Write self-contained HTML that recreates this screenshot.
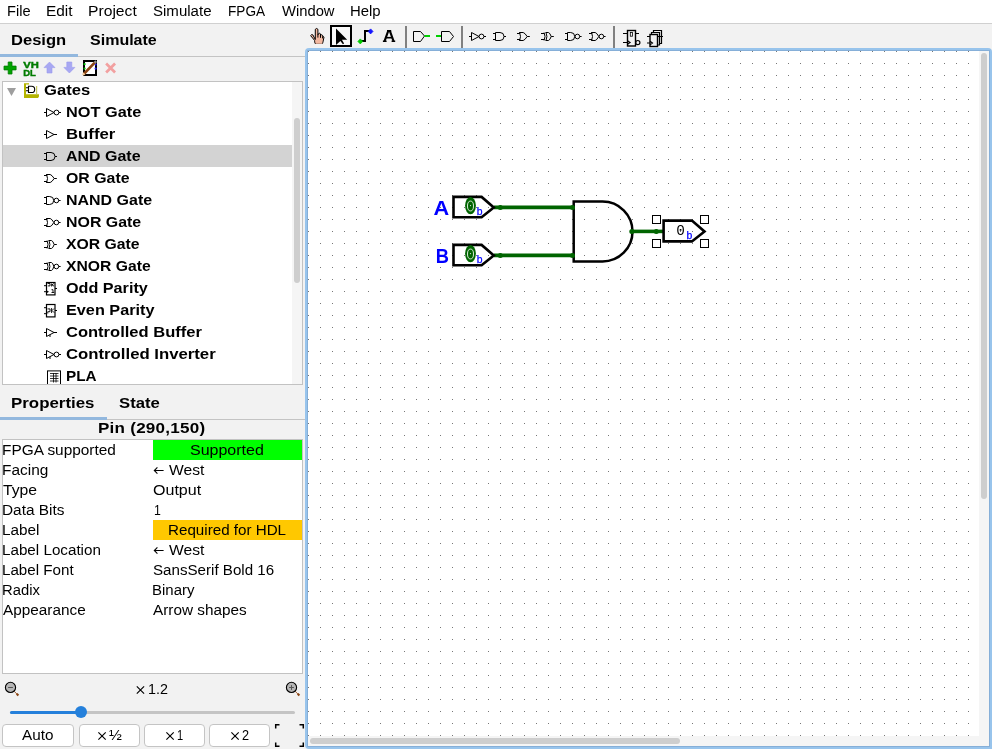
<!DOCTYPE html>
<html><head><meta charset="utf-8"><title>Logisim-evolution</title>
<style>
html,body{margin:0;padding:0;font-family:"Liberation Sans",sans-serif;}
body{width:992px;height:749px;position:relative;overflow:hidden;background:#f2f2f2;
 font-family:"Liberation Sans",sans-serif;}
.t{position:absolute;white-space:pre;line-height:1;transform-origin:0 0;color:#000;font-family:"Liberation Sans",sans-serif;}
.b{position:absolute;box-sizing:border-box;}
svg{position:absolute;overflow:visible;}
.btn{position:absolute;box-sizing:border-box;background:#fff;border:1px solid #c4c4c4;border-radius:4px;}
#all{position:absolute;left:0;top:0;width:992px;height:749px;will-change:transform;}
</style></head><body><div id="all">

<div class="b" style="left:0;top:0;width:992px;height:23px;background:#fff;"></div>
<div class="b" style="left:0;top:23px;width:992px;height:1px;background:#d0d0d0;"></div>
<span class="t" style="left:7.30px;top:3.56px;font-size:14.7px;transform:scaleX(0.9948);">File</span>
<span class="t" style="left:46.13px;top:3.56px;font-size:14.7px;transform:scaleX(1.0492);">Edit</span>
<span class="t" style="left:88.41px;top:3.56px;font-size:14.7px;transform:scaleX(1.0665);">Project</span>
<span class="t" style="left:152.90px;top:3.56px;font-size:14.7px;transform:scaleX(1.0239);">Simulate</span>
<span class="t" style="left:227.58px;top:3.56px;font-size:14.7px;transform:scaleX(0.9264);">FPGA</span>
<span class="t" style="left:281.62px;top:3.56px;font-size:14.7px;transform:scaleX(1.0052);">Window</span>
<span class="t" style="left:350.48px;top:3.56px;font-size:14.7px;transform:scaleX(1.0142);">Help</span>
<span class="t" style="left:11.29px;top:32.56px;font-size:14.7px;transform:scaleX(1.1272);font-weight:bold;">Design</span>
<span class="t" style="left:90.11px;top:32.56px;font-size:14.7px;transform:scaleX(1.0909);font-weight:bold;">Simulate</span>
<div class="b" style="left:0;top:56px;width:305px;height:1px;background:#c4c4c4;"></div>
<div class="b" style="left:0;top:54px;width:78px;height:3px;background:#93b8de;"></div>
<div class="b" style="left:2px;top:81px;width:301px;height:304px;background:#fff;border:1px solid #c2c2c2;"></div>
<div class="b" style="left:3px;top:145px;width:289px;height:22px;background:#d3d3d3;"></div>
<div class="b" style="left:292px;top:82px;width:10px;height:302px;background:#f5f5f5;"></div>
<div class="b" style="left:294px;top:118px;width:6px;height:165px;background:#cecece;border-radius:3px;"></div>
<span class="t" style="left:44.07px;top:83.16px;font-size:14.7px;transform:scaleX(1.1315);font-weight:bold;">Gates</span>
<span class="t" style="left:65.56px;top:104.56px;font-size:14.7px;transform:scaleX(1.1107);font-weight:bold;">NOT Gate</span>
<span class="t" style="left:65.53px;top:126.56px;font-size:14.7px;transform:scaleX(1.1399);font-weight:bold;">Buffer</span>
<span class="t" style="left:66.23px;top:148.56px;font-size:14.7px;transform:scaleX(1.0878);font-weight:bold;">AND Gate</span>
<span class="t" style="left:66.00px;top:170.56px;font-size:14.7px;transform:scaleX(1.0804);font-weight:bold;">OR Gate</span>
<span class="t" style="left:65.58px;top:192.56px;font-size:14.7px;transform:scaleX(1.0877);font-weight:bold;">NAND Gate</span>
<span class="t" style="left:65.58px;top:214.56px;font-size:14.7px;transform:scaleX(1.0841);font-weight:bold;">NOR Gate</span>
<span class="t" style="left:66.12px;top:236.56px;font-size:14.7px;transform:scaleX(1.0728);font-weight:bold;">XOR Gate</span>
<span class="t" style="left:66.13px;top:258.56px;font-size:14.7px;transform:scaleX(1.0693);font-weight:bold;">XNOR Gate</span>
<span class="t" style="left:65.98px;top:280.56px;font-size:14.7px;transform:scaleX(1.1009);font-weight:bold;">Odd Parity</span>
<span class="t" style="left:65.56px;top:302.56px;font-size:14.7px;transform:scaleX(1.1058);font-weight:bold;">Even Parity</span>
<span class="t" style="left:65.97px;top:324.56px;font-size:14.7px;transform:scaleX(1.1250);font-weight:bold;">Controlled Buffer</span>
<span class="t" style="left:65.96px;top:346.56px;font-size:14.7px;transform:scaleX(1.1392);font-weight:bold;">Controlled Inverter</span>
<span class="t" style="left:65.63px;top:368.56px;font-size:14.7px;transform:scaleX(1.0410);font-weight:bold;">PLA</span>
<svg style="left:0;top:0;" width="304" height="386" viewBox="0 0 304 386"><path d="M8.2,62 H12 V66.1 H16.1 V69.9 H12 V74 H8.2 V69.9 H4 V66.1 H8.2 Z" fill="#00a400" stroke="#007a00" stroke-width="0.8"/>
<text x="23.2" y="67.9" font-family="Liberation Sans, sans-serif" font-weight="bold" font-size="9.8" fill="#007c00" stroke="#007c00" stroke-width="0.45" textLength="15.6" lengthAdjust="spacingAndGlyphs">VH</text>
<text x="23.2" y="75.9" font-family="Liberation Sans, sans-serif" font-weight="bold" font-size="9.8" fill="#007c00" stroke="#007c00" stroke-width="0.45" textLength="12.6" lengthAdjust="spacingAndGlyphs">DL</text>
<path d="M49.5,62 L55,67.6 H52 V73 H47 V67.6 H44 Z" fill="#a8a8f2" stroke="#9898ec" stroke-width="0.6"/>
<path d="M69.4,73 L74.9,67.4 H71.8 V62 H66.8 V67.4 H63.9 Z" fill="#a8a8f2" stroke="#9898ec" stroke-width="0.6"/>
<rect x="84" y="61" width="12" height="14" fill="#fff" stroke="#000" stroke-width="2"/>
<circle cx="84.6" cy="64.2" r="1.1" fill="#00c000"/><circle cx="84.6" cy="68.6" r="1.1" fill="#00c000"/>
<circle cx="95.6" cy="64.4" r="1.1" fill="#2020ff"/><circle cx="95.6" cy="68.6" r="1.1" fill="#2020ff"/>
<path d="M83.8,74 L95.2,62.2" stroke="#8b4513" stroke-width="2.6" stroke-linecap="butt"/>
<path d="M82.8,75 L84.4,73.4" stroke="#f0c898" stroke-width="2.4"/>
<path d="M94.6,62.8 L96.2,61.2" stroke="#909090" stroke-width="2.4"/>
<path d="M107.1,64.5 L114.1,71.5 M114.1,64.5 L107.1,71.5" stroke="#f2a0a0" stroke-width="2.7" stroke-linecap="square"/>
<path d="M7,88 H16 L11.5,96 Z" fill="#9e9e9e"/>
<rect x="26" y="85" width="11" height="10" fill="#fff"/>
<path d="M24,83.3 H29 V84.6 H26 V94.2 H39 V96.4 L38,98 H24 Z" fill="#b4b400"/>
<rect x="36" y="86" width="1.2" height="8.4" fill="#c8c860"/>
<path d="M26,87.8 H28.5 M26,90.8 H28.5 M28.5,86.3 H31.6 A3.1,3.1 0 0 1 31.6,92.5 H28.5 Z" fill="none" stroke="#000" stroke-width="1.1"/><path d="M44,112.5 H46.5 M46.5,108.5 V116.5 L54,112.5 Z M59,112.5 H61" fill="none" stroke="#000" stroke-width="1.0"/>
<circle cx="56.5" cy="112.5" r="2.4" fill="none" stroke="#000" stroke-width="1.0"/>
<path d="M44,134.5 H46.5 M46.5,130.5 V138.5 L54,134.5 Z M54,134.5 H57" fill="none" stroke="#000" stroke-width="1.0"/>
<path d="M44,153.5 H46.5 M44,159.5 H46.5 M46.5,152.5 H51 A4,4 0 0 1 51,160.5 H46.5 Z" fill="none" stroke="#000" stroke-width="1.0"/>
<path d="M55,156.5 H57" fill="none" stroke="#000" stroke-width="1.0"/>
<path d="M44,175.5 H47.2 M44,181.5 H47.2 M46.2,174.5 H50.2 Q51.800000000000004,174.9 54.2,178.5 Q51.800000000000004,182.1 50.2,182.5 H46.2 M46.6,174.5 Q48.4,178.5 46.6,182.5" fill="none" stroke="#000" stroke-width="1.0"/>
<path d="M54.2,178.5 H56.8" fill="none" stroke="#000" stroke-width="1.0"/>
<path d="M44,197.5 H46.5 M44,203.5 H46.5 M46.5,196.5 H49.7 A4,4 0 0 1 49.7,204.5 H46.5 Z" fill="none" stroke="#000" stroke-width="1.0"/>
<circle cx="56.4" cy="200.5" r="2.3" fill="none" stroke="#000" stroke-width="1.0"/>
<path d="M58.7,200.5 H60.6" fill="none" stroke="#000" stroke-width="1.0"/>
<path d="M44,219.5 H47.2 M44,225.5 H47.2 M46.2,218.5 H50.2 Q51.800000000000004,218.9 53.8,222.5 Q51.800000000000004,226.1 50.2,226.5 H46.2 M46.6,218.5 Q48.4,222.5 46.6,226.5" fill="none" stroke="#000" stroke-width="1.0"/>
<circle cx="56.4" cy="222.5" r="2.3" fill="none" stroke="#000" stroke-width="1.0"/>
<path d="M58.7,222.5 H60.6" fill="none" stroke="#000" stroke-width="1.0"/>
<path d="M44,241.5 H47.2 M44,247.5 H47.2 M48.6,240.5 H51.4 Q53.0,240.9 54.2,244.5 Q53.0,248.1 51.4,248.5 H48.6 M49.0,240.5 Q50.8,244.5 49.0,248.5" fill="none" stroke="#000" stroke-width="1.0"/>
<path d="M47.1,240.5 Q48.9,244.5 47.1,248.5" fill="none" stroke="#000" stroke-width="1.0"/>
<path d="M54.2,244.5 H56.8" fill="none" stroke="#000" stroke-width="1.0"/>
<path d="M44,263.5 H47.2 M44,269.5 H47.2 M48.6,262.5 H51.4 Q53.0,262.9 53.8,266.5 Q53.0,270.1 51.4,270.5 H48.6 M49.0,262.5 Q50.8,266.5 49.0,270.5" fill="none" stroke="#000" stroke-width="1.0"/>
<path d="M47.1,262.5 Q48.9,266.5 47.1,270.5" fill="none" stroke="#000" stroke-width="1.0"/>
<circle cx="56.4" cy="266.5" r="2.3" fill="none" stroke="#000" stroke-width="1.0"/>
<path d="M58.7,266.5 H60.6" fill="none" stroke="#000" stroke-width="1.0"/>
<rect x="46.5" y="282.5" width="8.5" height="12.4" fill="none" stroke="#000" stroke-width="1.2"/>
<path d="M44,285.7 H46.5 M44,291.7 H46.5 M55,288.5 H57" fill="none" stroke="#000" stroke-width="1.0"/>
<path d="M47.5,283.5 H50 V285.9 H47.8 M51.6,283.5 V286.5 M53.8,283.5 L52,284.9 L54,286.1 M51.5,289.7 H53 V292.5 M51.5,292.5 H54.2" fill="none" stroke="#000" stroke-width="0.9"/>
<path d="M46.5,290.3 L49,291.8 L46.5,293.3 Z" fill="#000"/>
<rect x="46.5" y="304.5" width="8.5" height="12.4" fill="none" stroke="#000" stroke-width="1.2"/>
<path d="M44,307.7 H46.5 M44,313.7 H46.5 M55,310.5 H57" fill="none" stroke="#000" stroke-width="1.0"/>
<path d="M47.5,308.9 H50 V311.7 H47.8 V313.5 M51.6,308.0 V313.0 M54,308.5 L52,310.5 L54.2,312.7" fill="none" stroke="#000" stroke-width="0.9"/>
<path d="M44,332.5 H46.5 M46.5,328.5 V336.5 L54,332.5 Z M54,332.5 H57 M50,334.7 V337.0" fill="none" stroke="#000" stroke-width="1.0"/>
<path d="M44,354.5 H46.5 M46.5,350.5 V358.5 L54,354.5 Z M59,354.5 H61 M50,356.7 V359.0" fill="none" stroke="#000" stroke-width="1.0"/>
<circle cx="56.5" cy="354.5" r="2.4" fill="none" stroke="#000" stroke-width="1.0"/>
<rect x="47.5" y="370.9" width="13" height="14" fill="#fff" stroke="#000" stroke-width="1"/>
<path d="M50,373.5 H58.5 M50,376.0 H58.5 M50,378.5 H58.5 M50,381.0 H58.5 M53.5,373.0 V382.5 M56,373.0 V382.5" fill="none" stroke="#000" stroke-width="0.8"/></svg>
<div class="b" style="left:2px;top:384px;width:301px;height:1px;background:#c2c2c2;"></div>
<div class="b" style="left:0;top:385px;width:304px;height:6px;background:#f2f2f2;"></div>
<span class="t" style="left:11.37px;top:395.56px;font-size:14.7px;transform:scaleX(1.1489);font-weight:bold;">Properties</span>
<span class="t" style="left:118.99px;top:395.56px;font-size:14.7px;transform:scaleX(1.1374);font-weight:bold;">State</span>
<div class="b" style="left:0;top:419px;width:305px;height:1px;background:#c4c4c4;"></div>
<div class="b" style="left:0;top:417px;width:107px;height:3px;background:#93b8de;"></div>
<span class="t" style="left:98.06px;top:420.56px;font-size:14.7px;transform:scaleX(1.1600);letter-spacing:0.211px;font-weight:bold;">Pin (290,150)</span>
<div class="b" style="left:2px;top:439px;width:301px;height:235px;background:#fff;border:1px solid #c2c2c2;"></div>
<div class="b" style="left:153px;top:440px;width:149px;height:20px;background:#00ff00;"></div>
<div class="b" style="left:153px;top:520px;width:149px;height:20px;background:#ffc800;"></div>
<span class="t" style="left:2.28px;top:442.56px;font-size:14.7px;transform:scaleX(1.0492);">FPGA supported</span>
<span class="t" style="left:190.45px;top:442.56px;font-size:14.7px;transform:scaleX(1.0894);">Supported</span>
<span class="t" style="left:2.28px;top:462.56px;font-size:14.7px;transform:scaleX(1.0498);">Facing</span>
<span class="t" style="left:168.92px;top:462.56px;font-size:14.7px;transform:scaleX(1.0630);">West</span>
<svg style="left:153px;top:465px;" width="12" height="10" viewBox="0 0 12 10"><path d="M1.3,5.5 H10.6 M4.4,2.4 L1.3,5.5 L4.4,8.6" fill="none" stroke="#000" stroke-width="1.1"/></svg>
<span class="t" style="left:2.84px;top:482.56px;font-size:14.7px;transform:scaleX(1.0715);">Type</span>
<span class="t" style="left:152.84px;top:482.56px;font-size:14.7px;transform:scaleX(1.0917);">Output</span>
<span class="t" style="left:2.28px;top:502.56px;font-size:14.7px;transform:scaleX(1.0474);">Data Bits</span>
<span class="t" style="left:153.86px;top:502.56px;font-size:14.7px;transform:scaleX(0.8367);">1</span>
<span class="t" style="left:2.29px;top:522.56px;font-size:14.7px;transform:scaleX(1.0408);">Label</span>
<span class="t" style="left:168.25px;top:522.56px;font-size:14.7px;transform:scaleX(1.0330);">Required for HDL</span>
<span class="t" style="left:2.30px;top:542.56px;font-size:14.7px;transform:scaleX(1.0352);">Label Location</span>
<span class="t" style="left:168.92px;top:542.56px;font-size:14.7px;transform:scaleX(1.0630);">West</span>
<svg style="left:153px;top:545px;" width="12" height="10" viewBox="0 0 12 10"><path d="M1.3,5.5 H10.6 M4.4,2.4 L1.3,5.5 L4.4,8.6" fill="none" stroke="#000" stroke-width="1.1"/></svg>
<span class="t" style="left:2.30px;top:562.56px;font-size:14.7px;transform:scaleX(1.0324);">Label Font</span>
<span class="t" style="left:152.90px;top:562.56px;font-size:14.7px;transform:scaleX(1.0306);">SansSerif Bold 16</span>
<span class="t" style="left:2.33px;top:582.56px;font-size:14.7px;transform:scaleX(1.0077);">Radix</span>
<span class="t" style="left:152.37px;top:582.56px;font-size:14.7px;transform:scaleX(1.0193);">Binary</span>
<span class="t" style="left:3.13px;top:602.56px;font-size:14.7px;transform:scaleX(1.0439);">Appearance</span>
<span class="t" style="left:153.23px;top:602.56px;font-size:14.7px;transform:scaleX(1.0429);">Arrow shapes</span>
<svg style="left:0;top:0;" width="305" height="749" viewBox="0 0 305 749"><path d="M136.8,686.3 L144.1,693.6 M144.1,686.3 L136.8,693.6" fill="none" stroke="#000" stroke-width="1.15"/></svg>
<span class="t" style="left:148.21px;top:681.56px;font-size:14.7px;transform:scaleX(0.9751);">1.2</span>
<div class="b" style="left:10px;top:710.5px;width:285px;height:3px;background:#c4c4c4;border-radius:1.5px;"></div>
<div class="b" style="left:10px;top:710.5px;width:71px;height:3px;background:#2580db;border-radius:1.5px;"></div>
<div class="b" style="left:75px;top:706px;width:12px;height:12px;background:#2580db;border-radius:6px;"></div>
<div class="btn" style="left:2px;top:724px;width:72px;height:23px;"></div>
<span class="t" style="left:22.18px;top:727.56px;font-size:14.7px;transform:scaleX(1.0403);">Auto</span>
<div class="btn" style="left:79px;top:724px;width:61px;height:23px;"></div>
<span class="t" style="left:108.78px;top:727.56px;font-size:14.7px;transform:scaleX(1.0512);">½</span>
<svg style="left:0;top:0;" width="305" height="749" viewBox="0 0 305 749"><path d="M98.39999999999999,732.3 L105.69999999999999,739.6 M105.69999999999999,732.3 L98.39999999999999,739.6" fill="none" stroke="#000" stroke-width="1.15"/></svg>
<div class="btn" style="left:144px;top:724px;width:61px;height:23px;"></div>
<span class="t" style="left:177.05px;top:727.56px;font-size:14.7px;transform:scaleX(0.7578);">1</span>
<svg style="left:0;top:0;" width="305" height="749" viewBox="0 0 305 749"><path d="M166.4,732.3 L173.7,739.6 M173.7,732.3 L166.4,739.6" fill="none" stroke="#000" stroke-width="1.15"/></svg>
<div class="btn" style="left:209px;top:724px;width:61px;height:23px;"></div>
<span class="t" style="left:241.96px;top:727.56px;font-size:14.7px;transform:scaleX(0.8663);">2</span>
<svg style="left:0;top:0;" width="305" height="749" viewBox="0 0 305 749"><path d="M231.4,732.3 L238.7,739.6 M238.7,732.3 L231.4,739.6" fill="none" stroke="#000" stroke-width="1.15"/></svg>
<svg style="left:0;top:0;" width="992" height="50" viewBox="0 0 992 50"><path d="M315.3,39.5 L315.3,29.3 Q316.6,27.6 317.9,29.3 L317.9,35 L318.6,33.6 Q319.6,32.8 320.4,33.8 L320.6,35.2 Q321.6,34.2 322.4,35.2 L322.6,36.6 Q323.6,36 324,37 L323.4,40 L322.6,43.4 L315,43.4 L314.6,40.4 L310.6,35.6 Q311.4,34.2 312.8,34.8 Z" fill="#f2b8a0" stroke="#000" stroke-width="1" stroke-linejoin="round"/>
<path d="M317.9,35 V37.6 M320.5,35 V37.8 M322.6,36.6 V38.4" stroke="#000" stroke-width="1" fill="none"/>
<rect x="315.6" y="40" width="6.6" height="3.8" fill="#f2b8a0"/>
<rect x="331" y="26" width="20" height="20" fill="#f9f9f9" stroke="#000" stroke-width="2"/>
<path d="M336,28.6 L336,45 L340.4,40.9 L342.9,44.2 L344.1,43.4 L341.9,39.7 L347.2,39.7 Z" fill="#000"/>
<path d="M361,41 H365 V31 H370" fill="none" stroke="#000" stroke-width="2"/>
<path d="M360.3,38.9 L362.7,41.4 L360.3,43.9 L357.9,41.4 Z" fill="#00cc00" stroke="#00cc00" stroke-width="0.8" stroke-linejoin="round"/>
<path d="M370.6,28.9 L373,31.4 L370.6,33.9 L368.2,31.4 Z" fill="#1414ff" stroke="#1414ff" stroke-width="0.8" stroke-linejoin="round"/>
<path d="M388.2,31 L384.6,41 M389.9,31 L393.5,41" fill="none" stroke="#000" stroke-width="2.2"/>
<path d="M387,31 H391.2" stroke="#000" stroke-width="2"/>
<path d="M386,37.7 H392.2" stroke="#000" stroke-width="1.6"/>
<path d="M382.9,41.2 H386.6 M391.6,41.2 H395.2" stroke="#000" stroke-width="1.6"/>
<rect x="405" y="26" width="2" height="22" fill="#808080"/>
<rect x="461" y="26" width="2" height="22" fill="#808080"/>
<rect x="613" y="26" width="2" height="22" fill="#808080"/>
<path d="M413.5,31.5 H420.5 L424.5,36 L420.5,41.5 H413.5 Z" fill="none" stroke="#000" stroke-width="1"/>
<rect x="424.5" y="35" width="5.5" height="2" fill="#00d000"/>
<rect x="436" y="35" width="5.5" height="2" fill="#00d000"/>
<path d="M441.5,31.5 H449.5 L453.5,36.5 L449.5,41.5 H441.5 Z" fill="none" stroke="#000" stroke-width="1"/>
<path d="M469,36.5 H471.5 M471.5,32.5 V40.5 L479,36.5 Z M484,36.5 H486" fill="none" stroke="#000" stroke-width="1.0"/>
<circle cx="481.5" cy="36.5" r="2.4" fill="none" stroke="#000" stroke-width="1.0"/>
<path d="M493,33.5 H495.5 M493,39.5 H495.5 M495.5,32.5 H500 A4,4 0 0 1 500,40.5 H495.5 Z" fill="none" stroke="#000" stroke-width="1.0"/>
<path d="M504,36.5 H506" fill="none" stroke="#000" stroke-width="1.0"/>
<path d="M517,33.5 H520.2 M517,39.5 H520.2 M519.2,32.5 H523.2 Q524.8000000000001,32.9 527.2,36.5 Q524.8000000000001,40.1 523.2,40.5 H519.2 M519.6,32.5 Q521.4,36.5 519.6,40.5" fill="none" stroke="#000" stroke-width="1.0"/>
<path d="M527.2,36.5 H529.8" fill="none" stroke="#000" stroke-width="1.0"/>
<path d="M541,33.5 H544.2 M541,39.5 H544.2 M545.6,32.5 H548.4 Q550.0,32.9 551.2,36.5 Q550.0,40.1 548.4,40.5 H545.6 M546.0,32.5 Q547.8,36.5 546.0,40.5" fill="none" stroke="#000" stroke-width="1.0"/>
<path d="M544.1,32.5 Q545.9,36.5 544.1,40.5" fill="none" stroke="#000" stroke-width="1.0"/>
<path d="M551.2,36.5 H553.8" fill="none" stroke="#000" stroke-width="1.0"/>
<path d="M565,33.5 H567.5 M565,39.5 H567.5 M567.5,32.5 H570.7 A4,4 0 0 1 570.7,40.5 H567.5 Z" fill="none" stroke="#000" stroke-width="1.0"/>
<circle cx="577.4" cy="36.5" r="2.3" fill="none" stroke="#000" stroke-width="1.0"/>
<path d="M579.7,36.5 H581.6" fill="none" stroke="#000" stroke-width="1.0"/>
<path d="M589,33.5 H592.2 M589,39.5 H592.2 M591.2,32.5 H595.2 Q596.8000000000001,32.9 598.8,36.5 Q596.8000000000001,40.1 595.2,40.5 H591.2 M591.6,32.5 Q593.4,36.5 591.6,40.5" fill="none" stroke="#000" stroke-width="1.0"/>
<circle cx="601.4" cy="36.5" r="2.3" fill="none" stroke="#000" stroke-width="1.0"/>
<path d="M603.7,36.5 H605.6" fill="none" stroke="#000" stroke-width="1.0"/>
<rect x="627.5" y="30.5" width="8" height="15.5" fill="none" stroke="#000" stroke-width="1.4"/>
<path d="M623,33.5 H627.5 M623,42.5 H627.5 M636,33.5 H639 M627.5,40.8 L630,42.5 L627.5,44.2" fill="none" stroke="#000" stroke-width="1.2"/>
<rect x="630.3" y="32.4" width="2.2" height="3.8" fill="none" stroke="#000" stroke-width="0.8"/>
<circle cx="637.8" cy="42.6" r="2.1" fill="none" stroke="#000" stroke-width="1.2"/>
<path d="M653.5,32.5 V30.5 H661.5 V43.5 H659.5" fill="none" stroke="#000" stroke-width="1.2"/>
<path d="M651.5,34.5 V32.5 H659.5 V45 H657.5" fill="none" stroke="#000" stroke-width="1.2"/>
<rect x="650" y="34.5" width="7.5" height="12" fill="#f2f2f2" stroke="#000" stroke-width="1.4"/>
<path d="M647,36.5 H650 M647,43 H650 M657.5,36.5 H663 M650,41.3 L652.4,43 L650,44.7" fill="none" stroke="#000" stroke-width="1.2"/></svg>
<svg style="left:0;top:0;" width="305" height="749" viewBox="0 0 305 749"><path d="M14.1,691.1999999999999 L17.7,694.8" stroke="#9a5020" stroke-width="0.9"/>
<path d="M16.7,693.8 L18.4,695.5" stroke="#8b4513" stroke-width="2.1"/>
<circle cx="10.5" cy="687.4" r="5.1" fill="#b6b6b6" stroke="#000" stroke-width="1.1"/>
<path d="M8.1,687.5 H12.9" stroke="#555" stroke-width="1"/>
<path d="M295.1,691.1999999999999 L298.7,694.8" stroke="#9a5020" stroke-width="0.9"/>
<path d="M297.7,693.8 L299.4,695.5" stroke="#8b4513" stroke-width="2.1"/>
<circle cx="291.5" cy="687.4" r="5.1" fill="#b6b6b6" stroke="#000" stroke-width="1.1"/>
<path d="M289.1,687.5 H293.9" stroke="#555" stroke-width="1"/>
<path d="M291.5,685.1 V689.9" stroke="#555" stroke-width="1"/>
<path d="M275.7,728.5 V724.7 H279.5 M299.5,724.7 H303.3 V728.5 M303.3,742.5 V746.3 H299.5 M279.5,746.3 H275.7 V742.5" fill="none" stroke="#000" stroke-width="1.5"/></svg>
<div class="b" style="left:305px;top:48px;width:687px;height:701px;background:#98c4ec;border-radius:4px 4px 0 4px;"></div>
<div class="b" style="left:307px;top:50px;width:683px;height:697px;background:#86afd8;"></div>
<div class="b" style="left:308px;top:51px;width:681px;height:695px;background:#f5f5f5;"></div>
<svg style="left:308px;top:51px;" width="671" height="685" viewBox="0 0 671 685">
<defs><pattern id="g" x="0" y="0" width="12" height="12" patternUnits="userSpaceOnUse"><rect x="0" y="0" width="1" height="1" fill="#777"/></pattern></defs>
<rect x="0" y="0" width="671" height="685" fill="#fff"/>
<rect x="0" y="0" width="671" height="685" fill="url(#g)"/>
<path d="M294.5,150.5 H265.7 V210.5 H294.5 A30,30 0 0 0 294.5,150.5" fill="none" stroke="#000" stroke-width="2.5" stroke-linejoin="miter"/>
<line x1="186" y1="156.4" x2="264.5" y2="156.4" stroke="#006400" stroke-width="3.6"/>
<circle cx="192.3" cy="156.4" r="2.5" fill="#006400"/>
<circle cx="264.5" cy="156.4" r="2.5" fill="#006400"/>
<line x1="186" y1="204.4" x2="264.5" y2="204.4" stroke="#006400" stroke-width="3.6"/>
<circle cx="192.3" cy="204.4" r="2.5" fill="#006400"/>
<circle cx="264.5" cy="204.4" r="2.5" fill="#006400"/>
<line x1="324" y1="180.4" x2="355.5" y2="180.4" stroke="#006400" stroke-width="3.6"/>
<circle cx="323.8" cy="180.4" r="2.5" fill="#006400"/>
<circle cx="348.3" cy="180.4" r="2.5" fill="#006400"/>
<polygon points="145.5,145.9 173.6,145.9 185.8,156.4 173.6,166.3 145.5,166.3" fill="none" stroke="#000" stroke-width="2.6" stroke-linejoin="miter"/>
<ellipse cx="162.5" cy="154.6" rx="5.4" ry="8.6" fill="#006400"/>
<ellipse cx="162.5" cy="155" rx="3.0" ry="4.9" fill="none" stroke="#fff" stroke-opacity="0.85" stroke-width="1"/>
<circle cx="162.5" cy="154.6" r="0.65" fill="#fff" fill-opacity="0.85"/>
<text x="168.7" y="163.6" font-family="Liberation Sans, sans-serif" font-size="10.4" fill="#0000ff" stroke="#0000ff" stroke-width="0.25">b</text>
<polygon points="145.5,193.9 173.6,193.9 185.8,204.4 173.6,214.3 145.5,214.3" fill="none" stroke="#000" stroke-width="2.6" stroke-linejoin="miter"/>
<ellipse cx="162.5" cy="202.6" rx="5.4" ry="8.6" fill="#006400"/>
<ellipse cx="162.5" cy="203" rx="3.0" ry="4.9" fill="none" stroke="#fff" stroke-opacity="0.85" stroke-width="1"/>
<circle cx="162.5" cy="202.6" r="0.65" fill="#fff" fill-opacity="0.85"/>
<text x="168.7" y="211.6" font-family="Liberation Sans, sans-serif" font-size="10.4" fill="#0000ff" stroke="#0000ff" stroke-width="0.25">b</text>
<text transform="translate(141.3,164) scale(1.07,1)" x="0" y="0" text-anchor="end" font-family="Liberation Sans, sans-serif" font-weight="bold" font-size="20.3" fill="#0000ff">A</text>
<text transform="translate(141,212) scale(0.9,1)" x="0" y="0" text-anchor="end" font-family="Liberation Sans, sans-serif" font-weight="bold" font-size="20.3" fill="#0000ff">B</text>
<polygon points="355.6,169.6 383.9,169.6 396.5,180.4 383.9,190.4 355.6,190.4" fill="none" stroke="#000" stroke-width="2.6" stroke-linejoin="miter"/>
<text x="368.2" y="183.8" font-family="Liberation Mono, monospace" font-size="14.4" fill="#000">0</text>
<text x="378.6" y="187.7" font-family="Liberation Sans, sans-serif" font-size="10.4" fill="#0000ff" stroke="#0000ff" stroke-width="0.25">b</text>
<rect x="344.5" y="164.5" width="8" height="8" fill="#fff" stroke="#000" stroke-width="1"/>
<rect x="392.5" y="164.5" width="8" height="8" fill="#fff" stroke="#000" stroke-width="1"/>
<rect x="344.5" y="188.5" width="8" height="8" fill="#fff" stroke="#000" stroke-width="1"/>
<rect x="392.5" y="188.5" width="8" height="8" fill="#fff" stroke="#000" stroke-width="1"/>
</svg>
<div class="b" style="left:981px;top:53px;width:6px;height:446px;background:#cecece;border-radius:3px;"></div>
<div class="b" style="left:310px;top:738px;width:370px;height:6px;background:#cecece;border-radius:3px;"></div>
</div></body></html>
